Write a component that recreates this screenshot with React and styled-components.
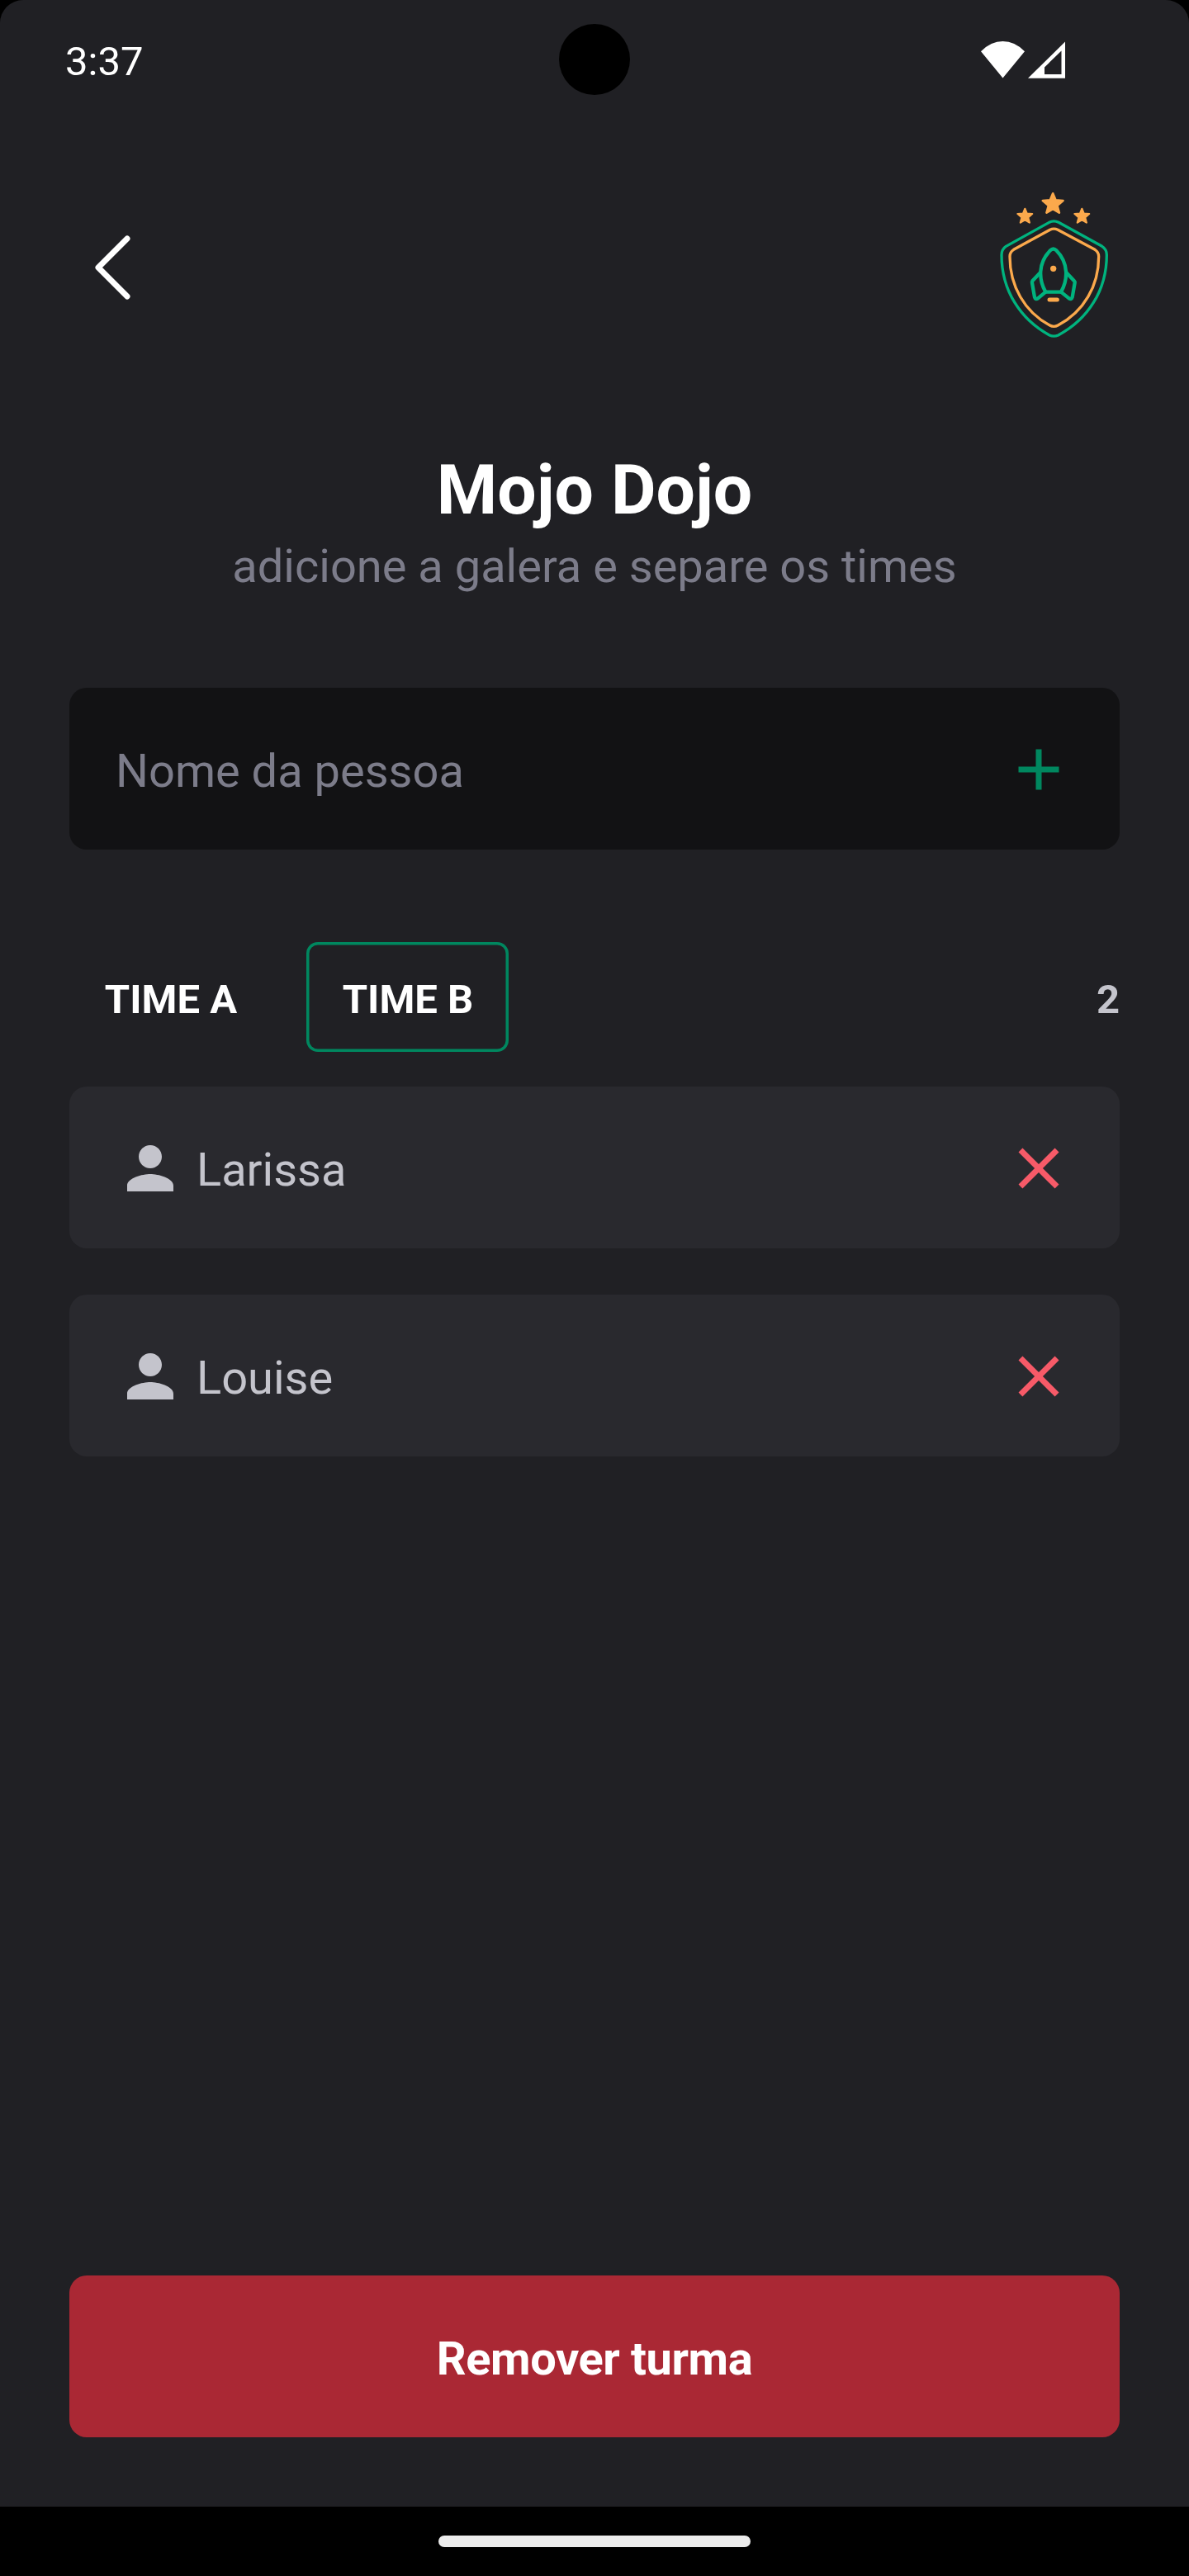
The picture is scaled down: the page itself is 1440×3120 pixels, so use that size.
import React, { useState } from "react";
import styled, { createGlobalStyle, ThemeProvider } from "styled-components";

const theme = {
  bg: "#202024",
  input: "#121214",
  card: "#29292e",
  white: "#ffffff",
  gray200: "#c4c4cc",
  gray300: "#7c7c8a",
  green700: "#00875f",
  green500: "#00b37e",
  orange: "#fba94c",
  red: "#f75a68",
  redDark: "#aa2834",
};

const GlobalStyle = createGlobalStyle`
  *, *::before, *::after { box-sizing: border-box; }
  body { margin: 0; background: #000; font-family: Roboto, "Liberation Sans", sans-serif; }
  button, input { font: inherit; border: 0; background: none; margin: 0; padding: 0; }
  svg { display: block; flex: none; }
`;

const Device = styled.div`
  display: flex;
  flex-direction: column;
  width: 1440px;
  height: 3120px;
  background: #000;
  overflow: hidden;
`;

const Screen = styled.div`
  position: relative;
  flex: 1;
  display: flex;
  flex-direction: column;
  background: ${({ theme }) => theme.bg};
  border-radius: 28px 28px 0 0;
`;

const StatusBar = styled.div`
  display: flex;
  align-items: center;
  justify-content: space-between;
  height: 148px;
  padding: 0 150px 0 79px;
  color: ${({ theme }) => theme.white};
`;

const Clock = styled.span`
  padding-top: 2px;
  font-size: 49px;
  line-height: 58px;
`;

const Camera = styled.div`
  position: absolute;
  top: 29px;
  left: 677px;
  width: 86px;
  height: 86px;
  border-radius: 50%;
  background: #000;
`;

const Content = styled.main`
  flex: 1;
  display: flex;
  flex-direction: column;
  padding: 80px 84px 84px;
`;

const Header = styled.header`
  display: flex;
  align-items: center;
  justify-content: space-between;
  height: 192px;
`;

const BackButton = styled.button`
  width: 112px;
  height: 112px;
`;

const Highlight = styled.div`
  padding-top: 125px;
  margin-bottom: 105px;
  text-align: center;
`;

const Title = styled.h1`
  margin: 0;
  color: ${({ theme }) => theme.white};
  font-size: 84px;
  line-height: 98px;
  font-weight: 700;
`;

const Subtitle = styled.p`
  margin: 1px 0 0;
  color: ${({ theme }) => theme.gray300};
  font-size: 56px;
  line-height: 84px;
`;

const Form = styled.div`
  display: flex;
  align-items: center;
  height: 196px;
  border-radius: 21px;
  background: ${({ theme }) => theme.input};
`;

const Input = styled.input`
  flex: 1;
  min-width: 0;
  height: 196px;
  padding: 6px 0 0 56px;
  color: ${({ theme }) => theme.white};
  font-size: 56px;
  outline: none;
  &::placeholder {
    color: ${({ theme }) => theme.gray300};
    opacity: 1;
  }
`;

const IconButton = styled.button`
  display: flex;
  align-items: center;
  justify-content: center;
  flex: none;
  width: 196px;
  height: 196px;
  padding-top: 2px;
  color: ${({ theme, $danger }) => ($danger ? theme.red : theme.green700)};
`;

const Filters = styled.div`
  display: flex;
  align-items: center;
  gap: 42px;
  margin: 112px 0 42px;
`;

const Filter = styled.button`
  width: 245px;
  height: 133px;
  padding: 5px 0 0 1px;
  border-radius: 14px;
  box-shadow: ${({ theme, $active }) =>
    $active ? `inset 0 0 0 3.5px ${theme.green700}` : "none"};
  color: ${({ theme }) => theme.white};
  font-size: 49px;
  font-weight: 700;
  text-transform: uppercase;
  white-space: nowrap;
`;

const Count = styled.span`
  margin-left: auto;
  padding-top: 5px;
  color: ${({ theme }) => theme.gray200};
  font-size: 49px;
  font-weight: 700;
`;

const Players = styled.div`
  display: flex;
  flex-direction: column;
  gap: 56px;
`;

const PlayerCard = styled.div`
  display: flex;
  align-items: center;
  height: 196px;
  padding-left: 56px;
  border-radius: 21px;
  background: ${({ theme }) => theme.card};
  color: ${({ theme }) => theme.gray200};
`;

const PersonSlot = styled.span`
  padding-top: 2px;
  margin-right: 14px;
`;

const PlayerName = styled.span`
  flex: 1;
  padding-top: 6px;
  font-size: 56px;
`;

const RemoveButton = styled.button`
  height: 196px;
  margin-top: auto;
  padding-top: 6px;
  border-radius: 21px;
  background: ${({ theme }) => theme.redDark};
  color: ${({ theme }) => theme.white};
  font-size: 56px;
  font-weight: 700;
  letter-spacing: -0.4px;
`;

const NavigationBar = styled.div`
  display: flex;
  align-items: center;
  justify-content: center;
  height: 84px;
`;

const HomeHandle = styled.div`
  width: 378px;
  height: 14px;
  border-radius: 7px;
  background: #ececec;
`;

function SignalIcons() {
  return (
    <svg width="102" height="48" viewBox="1188 50 102 48" fill="#fff">
      <path d="M1214.5 94.5 1188 62.2Q1200 50 1214.5 50T1241 62.2Z" />
      <path fillRule="evenodd" d="M1245 94.8 1290 50.5V94.8ZM1265 90H1285.5V61.5L1265 81.5Z" />
    </svg>
  );
}

function CaretLeft() {
  return (
    <svg width="112" height="112" viewBox="0 0 256 256">
      <path
        d="M160 208 80 128l80-80"
        fill="none"
        stroke="#fff"
        strokeWidth="16"
        strokeLinecap="round"
        strokeLinejoin="round"
      />
    </svg>
  );
}

function MaterialIcon({ d }) {
  return (
    <svg width="84" height="84" viewBox="0 0 24 24" fill="currentColor">
      <path d={d} />
    </svg>
  );
}

const ICONS = {
  add: "M19 13h-6v6h-2v-6H5v-2h6V5h2v6h6v2z",
  close:
    "M19 6.41L17.59 5 12 10.59 6.41 5 5 6.41 10.59 12 5 17.59 6.41 19 12 13.41 17.59 19 19 17.59 13.41 12z",
  person:
    "M12 12c2.21 0 4-1.79 4-4s-1.79-4-4-4-4 1.79-4 4 1.79 4 4 4zm0 2c-2.67 0-8 1.34-8 4v2h16v-2c0-2.66-5.33-4-8-4z",
};

const STAR = "M0-37 10-13 37-11 16 7 23 33 0 19-23 33-16 7-37-11-10-13Z";

function Logo() {
  return (
    <svg width="161" height="192" viewBox="45 54 483 576" fill="none" strokeLinejoin="round" strokeLinecap="round">
      <g fill={theme.orange} stroke={theme.orange}>
        <path d={STAR} transform="translate(285.5 110)" strokeWidth="8" />
        <path d={STAR} transform="translate(184 155) scale(.72)" strokeWidth="9" />
        <path d={STAR} transform="translate(391 155) scale(.72)" strokeWidth="9" />
      </g>
      <path
        d="M272 178Q289 169 306 178L464 265Q481 276 481 296C481 425 413 530 305 588Q289 595 273 588C167 530 99 425 99 296Q99 276 115 265Z"
        stroke={theme.green500}
        strokeWidth="10"
      />
      <path
        d="M275 205Q289 198 303 205L438 277Q452 286 452 302C452 408 398 503 304 552Q289 560 274 552C182 503 129 408 129 302Q129 286 143 277Z"
        stroke={theme.orange}
        strokeWidth="10"
      />
      <g stroke={theme.green500} strokeWidth="13">
        <path d="M259 431C234 387 230 327 276 280Q287 269 298 280C344 327 340 387 315 431Z" />
        <path d="M238 362 211 391Q209 394 210 398L219 450Q222 460 231 454L259 431" />
        <path d="M336 362 363 391Q366 394 365 398L356 450Q353 460 344 454L315 431" />
      </g>
      <circle cx="287" cy="346" r="11" fill={theme.orange} />
      <path d="M273 459H301" stroke={theme.orange} strokeWidth="15" />
    </svg>
  );
}

const TEAMS = ["Time A", "Time B"];

export default function App() {
  const [team, setTeam] = useState("Time B");
  const players = ["Larissa", "Louise"];

  return (
    <ThemeProvider theme={theme}>
      <GlobalStyle />
      <Device>
        <Screen>
          <StatusBar>
            <Clock>3:37</Clock>
            <SignalIcons />
          </StatusBar>
          <Camera />
          <Content>
            <Header>
              <BackButton aria-label="Voltar">
                <CaretLeft />
              </BackButton>
              <Logo />
            </Header>
            <Highlight>
              <Title>Mojo Dojo</Title>
              <Subtitle>adicione a galera e separe os times</Subtitle>
            </Highlight>
            <Form>
              <Input placeholder="Nome da pessoa" />
              <IconButton aria-label="Adicionar">
                <MaterialIcon d={ICONS.add} />
              </IconButton>
            </Form>
            <Filters>
              {TEAMS.map((name) => (
                <Filter key={name} $active={name === team} onClick={() => setTeam(name)}>
                  {name}
                </Filter>
              ))}
              <Count>{players.length}</Count>
            </Filters>
            <Players>
              {players.map((name) => (
                <PlayerCard key={name}>
                  <PersonSlot>
                    <MaterialIcon d={ICONS.person} />
                  </PersonSlot>
                  <PlayerName>{name}</PlayerName>
                  <IconButton $danger aria-label="Remover">
                    <MaterialIcon d={ICONS.close} />
                  </IconButton>
                </PlayerCard>
              ))}
            </Players>
            <RemoveButton>Remover turma</RemoveButton>
          </Content>
        </Screen>
        <NavigationBar>
          <HomeHandle />
        </NavigationBar>
      </Device>
    </ThemeProvider>
  );
}
